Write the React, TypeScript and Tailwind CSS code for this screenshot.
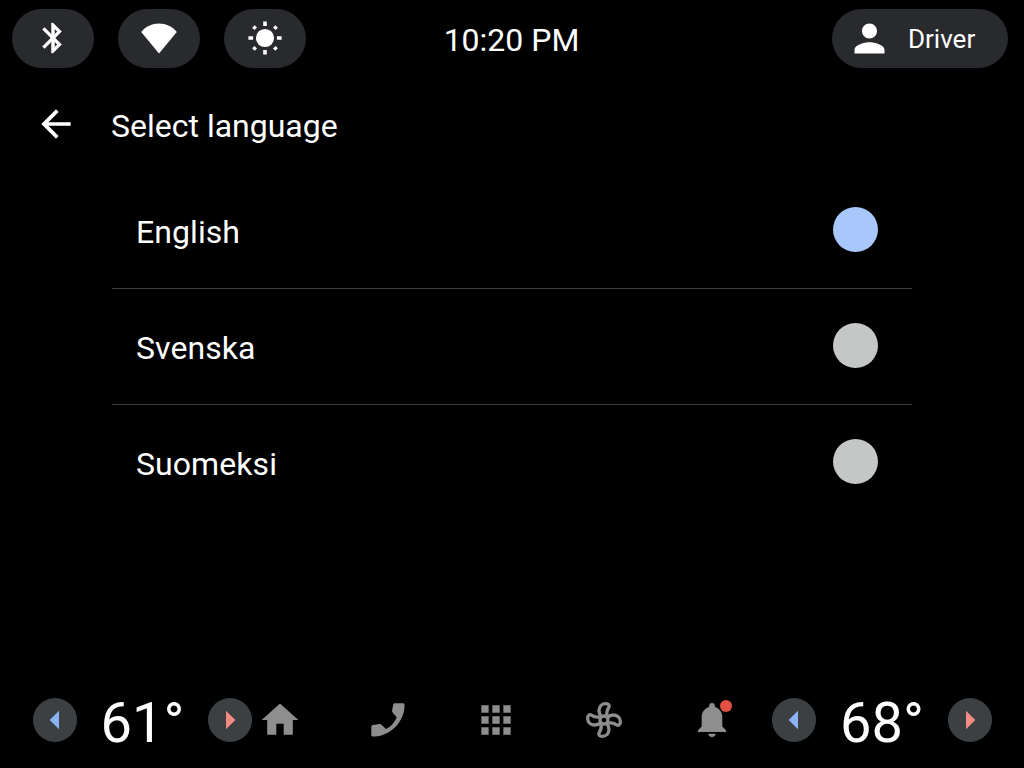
import type { ReactNode } from "react";

function Pill({ children }: { children: ReactNode }) {
  return (
    <div className="flex h-[59px] w-[82px] items-center justify-center rounded-full bg-[#292a2d]">{children}</div>
  );
}

function Glyph({ d, className, box = "0 0 24 24" }: { d: string; className: string; box?: string }) {
  return (
    <svg viewBox={box} className={className} fill="currentColor">
      <path d={d} />
    </svg>
  );
}

function StatusBar() {
  return (
    <header className="grid h-[77px] grid-cols-[1fr_auto_1fr] items-start pt-[9px] pr-4 pl-3">
      <div className="flex gap-6">
        <Pill>
          <Glyph
            className="mb-px size-9 stroke-white stroke-[0.3]"
            d="M17.71 7.71L12 2h-1v7.59L6.41 5 5 6.41 10.59 12 5 17.59 6.41 19 11 14.41V22h1l5.71-5.71-4.3-4.29 4.3-4.29zM13 5.83l1.88 1.88L13 9.59V5.83zm1.88 10.46L13 18.17v-3.76l1.88 1.88z"
          />
        </Pill>
        <Pill>
          <svg viewBox="0 0 36 31" className="h-[31px] w-9" fill="currentColor">
            <path d="M18 30.6 L0.2 9 C4.8 3.3 11 0.4 18 0.4 S31.2 3.3 35.8 9 Z" />
          </svg>
        </Pill>
        <Pill>
          <svg viewBox="-18 -18 36 36" className="mb-[1.5px] size-9" fill="currentColor" stroke="currentColor">
            <circle r="9.1" stroke="none" />
            <path
              d="M0-16.6v4.7M0 16.6v-4.7M-16.6 0h4.7M16.6 0h-4.7M-11.6-11.6l2.3 2.3M11.6-11.6l-2.3 2.3M-11.6 11.6l2.3-2.3M11.6 11.6l-2.3-2.3"
              strokeWidth="3.6"
            />
          </svg>
        </Pill>
      </div>
      <div className="pt-2.5 pl-[3px] text-[32px] leading-[42px]">10:20 PM</div>
      <div className="flex h-[59px] w-44 items-center justify-self-end rounded-full bg-[#292a2d] pl-[15px]">
        <Glyph
          className="size-[45px]"
          d="M12 12c2.21 0 4-1.79 4-4s-1.79-4-4-4-4 1.79-4 4 1.79 4 4 4zm0 2c-2.67 0-8 1.34-8 4v2h16v-2c0-2.66-5.33-4-8-4z"
        />
        <span className="ml-4 pt-0.5 text-[26px]">Driver</span>
      </div>
    </header>
  );
}

function LanguageRow({ name, selected, last }: { name: string; selected?: boolean; last?: boolean }) {
  return (
    <li
      className={`flex h-[116px] items-center justify-between border-b pr-[34px] pl-6 ${last ? "border-transparent" : "border-[#3f3f3f]"}`}
    >
      <span className="pt-0.5 text-[32px] tracking-[0.07px]">{name}</span>
      <span className={`mb-0.5 size-[45px] rounded-full ${selected ? "bg-[#a8c7fa]" : "bg-[#c4c7c5]"}`} />
    </li>
  );
}

function Arrow({ warm }: { warm?: boolean }) {
  return (
    <span className="flex size-11 items-center justify-center rounded-full bg-[#3c4043]">
      <svg viewBox="0 0 44 44" className={`size-11 ${warm ? "text-[#f28b82]" : "text-[#8ab4f8]"}`} fill="currentColor">
        <path d={warm ? "M18 12.7v18.6L27.3 22z" : "M26 12.7v18.6L16.7 22z"} />
      </svg>
    </span>
  );
}

function Temperature({ value }: { value: number }) {
  return (
    <div className="flex items-center justify-between">
      <Arrow />
      <span className="pt-1.5 text-[56px] leading-none">{value}°</span>
      <Arrow warm />
    </div>
  );
}

function Fan() {
  return (
    <svg viewBox="-22 -22 44 44" className="size-11 shrink-0" fill="none" stroke="currentColor" strokeWidth="3.3">
      <circle r="4" />
      {[0, 90, 180, 270].map((angle) => (
        <path
          key={angle}
          transform={`rotate(${angle})`}
          d="M-2.6-3.2C-4-5-5.2-7-5-9.6C-4.8-13.4-2.2-16.4 1.8-16.4C4.6-16.4 6-14.6 4.8-12.6C3.4-10.6 2.2-8.6 3-4.2"
        />
      ))}
    </svg>
  );
}

function BottomBar() {
  return (
    <footer className="grid h-24 grid-cols-[219px_1fr_220px] pr-8 pl-[33px]">
      <Temperature value={61} />
      <nav className="flex items-center gap-16 pl-1.5 text-[#8e8e8e]">
        <Glyph className="size-11 shrink-0" d="M10 20v-6h4v6h5v-8h3L12 3 2 12h3v8z" />
        <Glyph
          className="size-11 shrink-0"
          box="0 0 44 44"
          d="M28.8 5.3H37Q38.6 5.3 38.6 7C38.6 24 24 38.6 7 38.6Q5.3 38.6 5.3 37V28.8Q5.3 27.3 6.8 27L13.4 26.1Q14.6 25.9 15.4 26.7L20 31.1C25 28.4 28.5 24.5 30.8 19.2L26.6 14.6Q25.9 13.8 26.1 12.6L27.2 6.7Q27.4 5.3 28.8 5.3Z"
        />
        <Glyph
          className="size-11 shrink-0"
          d="M4 8h4V4H4v4zm6 12h4v-4h-4v4zm-6 0h4v-4H4v4zm0-6h4v-4H4v4zm6 0h4v-4h-4v4zm6-10v4h4V4h-4zm-6 4h4V4h-4v4zm6 6h4v-4h-4v4zm0 6h4v-4h-4v4z"
        />
        <Fan />
        <div className="relative">
          <Glyph
            className="size-11 shrink-0"
            box="0 0 44 44"
            d="M22 5C23.8 5 24.9 6.2 24.9 7.8V9C29.4 10.2 32.3 14.2 32.3 19V28.4L36 32.3V34H8V32.3L11.7 28.4V19C11.7 14.2 14.6 10.2 19.1 9V7.8C19.1 6.2 20.2 5 22 5ZM18.3 35.8H25.7C25.5 37.8 24.1 39.1 22 39.1S18.5 37.8 18.3 35.8Z"
          />
          <span className="absolute top-0.5 right-0.5 size-3 rounded-full bg-[#e25142]" />
        </div>
      </nav>
      <Temperature value={68} />
    </footer>
  );
}

export default function App() {
  return (
    <div className="flex h-screen w-screen flex-col overflow-hidden bg-black font-['Roboto',sans-serif] text-white">
      <StatusBar />
      <main className="flex-1">
        <div className="flex h-[96px] items-center pl-[34px]">
          <Glyph className="mb-0.5 size-11" d="M20 11H7.83l5.59-5.59L12 4l-8 8 8 8 1.41-1.41L7.83 13H20v-2z" />
          <h1 className="ml-[33px] pt-0.5 text-[32px]">Select language</h1>
        </div>
        <ul className="mx-28">
          <LanguageRow name="English" selected />
          <LanguageRow name="Svenska" />
          <LanguageRow name="Suomeksi" last />
        </ul>
      </main>
      <BottomBar />
    </div>
  );
}
